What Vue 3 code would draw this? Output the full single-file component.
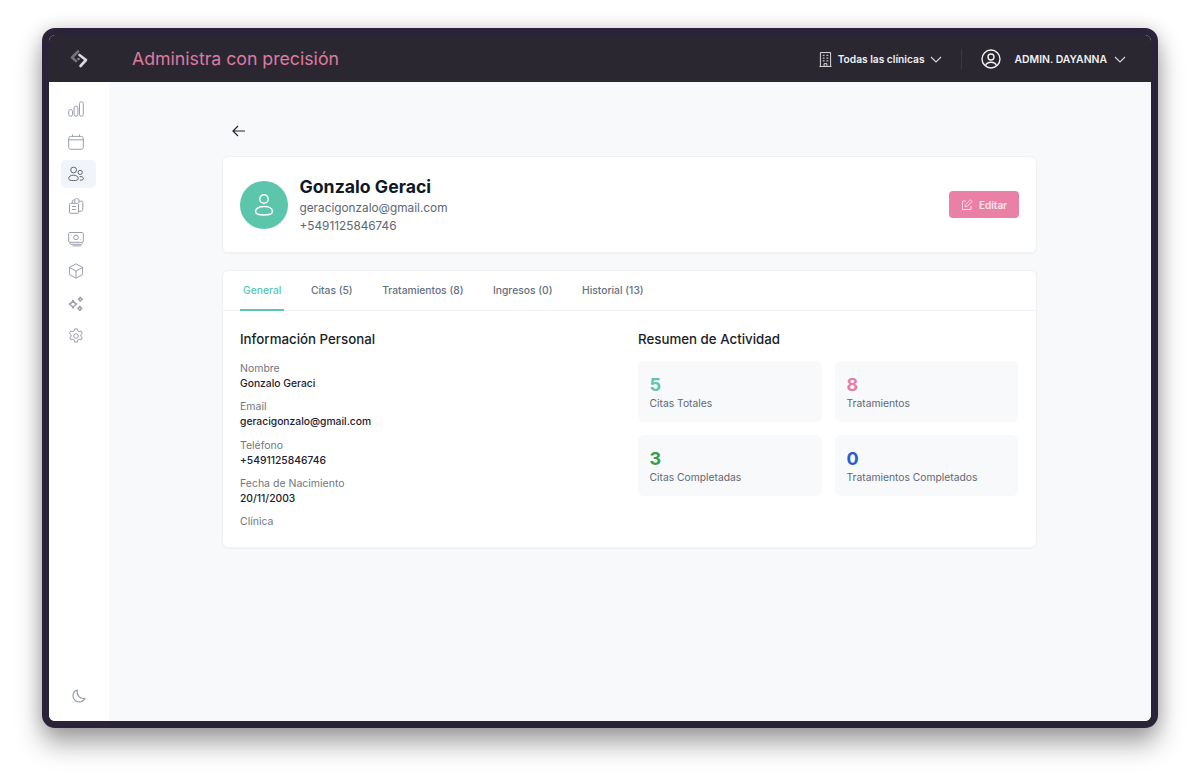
<template>
  <div class="page">
    <div class="frame">
      <header class="topbar">
        <div class="logo-cell">
          <svg width="20" height="20" viewBox="0 0 20 20" fill="none">
            <path d="M9 2.500 3 8.500 7 12" stroke="#77737c" stroke-width="2.600" stroke-linecap="round" stroke-linejoin="round"/>
            <path d="M10.500 6 17 11 11.500 17" stroke="#dcdbde" stroke-width="2.600" stroke-linecap="round" stroke-linejoin="round"/>
            <circle cx="9.500" cy="10" r="1.300" fill="#8b8890"/>
          </svg>
        </div>
        <h1 class="slogan">Administra con precisión</h1>
        <div class="top-actions">
          <div class="clinics">
            <svg width="13" height="17" viewBox="0 0 14 17" fill="none" stroke="#e6e6e8" stroke-width="1">
              <path d="M1.500 16V1h11v15M.5 16h13M5.500 16v-3h3v3"/>
              <path d="M4 4h2M8 4h2M4 7h2M8 7h2M4 10h2M8 10h2"/>
            </svg>
            <span>Todas las clínicas</span>
            <svg class="chev" width="12" height="7" viewBox="0 0 12 7" fill="none"><path d="m1 1 5 5 5-5" stroke="#d5d5d8" stroke-width="1.100"/></svg>
          </div>
          <div class="divider"></div>
          <div class="user">
            <svg width="20" height="20" viewBox="0 0 20 20" fill="none" stroke="#f1f1f2" stroke-width="1.400">
              <circle cx="10" cy="10" r="9"/>
              <circle cx="10" cy="8" r="3"/>
              <path d="M4.600 16.400c.8-2.300 2.600-3.200 5.400-3.200s4.600.9 5.400 3.200"/>
            </svg>
            <span>ADMIN. DAYANNA</span>
            <svg class="chev" width="12" height="7" viewBox="0 0 12 7" fill="none"><path d="m1 1 5 5 5-5" stroke="#d5d5d8" stroke-width="1.100"/></svg>
          </div>
        </div>
      </header>

      <div class="body">
        <aside class="sidebar">
          <nav class="nav">
            <a class="nav-item">
              <svg width="16" height="16" viewBox="0 0 16 16" fill="none" class="ico">
                <rect x=".7" y="8.500" width="3.800" height="6.800" rx="1.900"/>
                <rect x="6.100" y="5" width="3.800" height="10.300" rx="1.900"/>
                <rect x="11.500" y=".7" width="3.800" height="14.600" rx="1.900"/>
              </svg>
            </a>
            <a class="nav-item">
              <svg width="16" height="16" viewBox="0 0 16 16" fill="none" class="ico">
                <rect x=".7" y="2.400" width="14.600" height="12.900" rx="2"/>
                <path d="M.7 5.800h14.600M4.500.5v2.600M11.500.5v2.600"/>
              </svg>
            </a>
            <a class="nav-item active">
              <svg width="16" height="16" viewBox="0 0 16 16" fill="none" class="ico dark">
                <circle cx="5.600" cy="4" r="2.900"/>
                <circle cx="12.200" cy="6.400" r="2.100"/>
                <path d="M5.400 9.200C2.600 9.200.7 10.400.7 12.400c0 1.600 1.400 2.200 4.700 2.200s4.800-.6 4.800-2.200c0-2-2-3.200-4.800-3.200Z"/>
                <path d="M11.600 10.600c2.200-.3 3.800.5 3.800 2 0 1.100-1.200 1.600-3.600 1.600"/>
              </svg>
            </a>
            <a class="nav-item">
              <svg width="16" height="16" viewBox="0 0 16 16" fill="none" class="ico">
                <rect x="1.500" y="5.300" width="9" height="10" rx="1.200"/>
                <path d="M4.100 8.500h3.800M4.100 11.500h3.800"/>
                <path d="M4.300 5V3.200c0-.7.5-1.200 1.200-1.200h1.300M6.800 5V2.200C6.800 1.300 7.400.7 8.300.7h1.200c.8 0 1.400.6 1.400 1.400V5M10.900 3.200h2.800c.6 0 1.100.5 1.100 1.100v7.400c0 .8-.6 1.400-1.400 1.400h-2.800"/>
              </svg>
            </a>
            <a class="nav-item">
              <svg width="16" height="16" viewBox="0 0 16 16" fill="none" class="ico">
                <rect x=".7" y="1.500" width="14.600" height="9.800" rx="1"/>
                <circle cx="8" cy="6.400" r="2.300"/>
                <path d="M3 4.200h.6M12.400 8.600h.6M2 11.300v1c0 .6.4 1 1 1h10.500c.6 0 1-.4 1-1M4.600 14.900h8.800"/>
              </svg>
            </a>
            <a class="nav-item">
              <svg width="16" height="16" viewBox="0 0 16 16" fill="none" class="ico">
                <path d="M8 .8 14.600 4.400v7.200L8 15.200 1.400 11.600V4.400L8 .8Z"/>
                <path d="M1.400 4.400 8 8l6.600-3.600M8 8v7.200"/>
              </svg>
            </a>
            <a class="nav-item">
              <svg width="16" height="16" viewBox="0 0 16 16" fill="none" class="ico thick">
                <path d="M5 4c.5 2.400 1.600 3.600 4 4.200-2.400.6-3.500 1.800-4 4.200-.5-2.400-1.600-3.600-4-4.200C3.400 7.600 4.500 6.400 5 4Z"/>
                <path d="M12.300.8c.3 1.400 1 2.100 2.400 2.400-1.400.3-2.100 1-2.400 2.400-.3-1.400-1-2.100-2.400-2.400 1.400-.3 2.100-1 2.400-2.400Z"/>
                <path d="M11.800 10c.3 1.400 1 2.100 2.400 2.400-1.400.3-2.100 1-2.400 2.400-.3-1.400-1-2.100-2.400-2.400 1.400-.3 2.100-1 2.400-2.400Z"/>
              </svg>
            </a>
            <a class="nav-item">
              <svg width="16" height="16" viewBox="0 0 16 16" fill="none" class="ico">
                <path d="M6.700.9h2.600l.4 2 1.400.8 2-.6 1.300 2.200-1.500 1.400v1.600l1.500 1.400-1.300 2.200-2-.6-1.400.8-.4 2H6.700l-.4-2-1.400-.8-2 .6-1.300-2.200 1.500-1.400V6.700L1.400 5.300l1.300-2.200 2 .6 1.400-.8.6-2Z"/>
                <circle cx="8" cy="8" r="2.300"/>
              </svg>
            </a>
          </nav>
          <svg class="moon" width="14" height="14" viewBox="0 0 14 14" fill="none">
            <path d="M5.200 1C2.800 1.800 1 4 1 6.800 1 10.200 3.800 13 7.200 13c2.500 0 4.700-1.500 5.800-3.700-4.700 1-8.800-3-7.800-8.300Z" stroke="#8f97a3" stroke-width="1.100" stroke-linejoin="round"/>
          </svg>
        </aside>

        <main class="content">
          <div class="container">
            <button class="back">
              <svg width="14" height="12" viewBox="0 0 14 12" fill="none"><path d="M13 6H1.500M6 1 1 6l5 5" stroke="#1f2430" stroke-width="1.200"/></svg>
            </button>

            <section class="card profile">
              <div class="avatar">
                <svg width="20" height="24" viewBox="0 0 20 24" fill="none" stroke="#fff" stroke-width="1.400">
                  <circle cx="10" cy="6" r="4.200"/>
                  <path d="M10 13.500c-5 0-8.500 2-8.500 5 0 2.300 2.500 3.500 8.500 3.500s8.500-1.200 8.500-3.500c0-3-3.500-5-8.500-5Z"/>
                </svg>
              </div>
              <div class="who">
                <h2>{{ patient.name }}</h2>
                <p>{{ patient.email }}</p>
                <p>{{ patient.phone }}</p>
              </div>
              <button class="edit">
                <svg width="12" height="12" viewBox="0 0 12 12" fill="none" stroke="#fbdce7" stroke-width="1">
                  <path d="M10 7v3.500H1.500V2H5"/>
                  <path d="M4.500 5.500 9.500.8l1.700 1.700-5 4.800-2 .4.300-2.200Z"/>
                </svg>
                Editar
              </button>
            </section>

            <section class="card details">
              <div class="tabs">
                <a v-for="(t, i) in tabs" :key="t" class="tab" :class="{ on: i === 0 }">{{ t }}</a>
              </div>
              <div class="columns">
                <div>
                  <h3>Información Personal</h3>
                  <dl class="fields">
                    <div v-for="f in fields" :key="f.label" class="field">
                      <dt>{{ f.label }}</dt>
                      <dd v-if="f.value">{{ f.value }}</dd>
                    </div>
                  </dl>
                </div>
                <div>
                  <h3>Resumen de Actividad</h3>
                  <div class="stats">
                    <div v-for="s in stats" :key="s.label" class="stat">
                      <strong :class="s.tone">{{ s.value }}</strong>
                      <span>{{ s.label }}</span>
                    </div>
                  </div>
                </div>
              </div>
            </section>
          </div>
        </main>
      </div>
    </div>
  </div>
</template>

<script setup>
const patient = {
  name: 'Gonzalo Geraci',
  email: 'geracigonzalo@gmail.com',
  phone: '+5491125846746'
}

const tabs = ['General', 'Citas (5)', 'Tratamientos (8)', 'Ingresos (0)', 'Historial (13)']

const fields = [
  { label: 'Nombre', value: patient.name },
  { label: 'Email', value: patient.email },
  { label: 'Teléfono', value: patient.phone },
  { label: 'Fecha de Nacimiento', value: '20/11/2003' },
  { label: 'Clínica', value: '' }
]

const stats = [
  { value: 5, label: 'Citas Totales', tone: 'teal' },
  { value: 8, label: 'Tratamientos', tone: 'pink' },
  { value: 3, label: 'Citas Completadas', tone: 'green' },
  { value: 0, label: 'Tratamientos Completados', tone: 'blue' }
]
</script>

<style>
html,
body {
  margin: 0;
  background: #fff;
}
</style>

<style scoped>
.page {
  width: 1200px;
  height: 783px;
  padding: 28px 42px 55px;
  box-sizing: border-box;
  overflow: hidden;
  font-family: Inter, "Liberation Sans", sans-serif;
  background: #fff;
}
.frame {
  height: 100%;
  box-sizing: border-box;
  display: flex;
  flex-direction: column;
  border: 7px solid #2b2438;
  border-radius: 13px;
  overflow: hidden;
  background: #fff;
  box-shadow: 0 16px 26px rgba(0, 0, 0, 0.34), 0 0 18px rgba(0, 0, 0, 0.16);
}
.topbar {
  height: 47px;
  flex: none;
  display: flex;
  align-items: center;
  background: #2a2731;
}
.logo-cell {
  width: 60px;
  display: flex;
  justify-content: center;
}
.slogan {
  margin: 0 0 0 23px;
  font-size: 17.700px;
  font-weight: 400;
  color: #df7aa0;
}
.top-actions {
  margin-left: auto;
  display: flex;
  align-items: center;
  margin-top: 1px;
  padding-right: 25px;
  font-size: 10.400px;
  font-weight: 600;
  color: #f1f1f2;
}
.clinics,
.user {
  display: flex;
  align-items: center;
}
.clinics span {
  margin: 0 5px 0 6px;
  font-size: 10.200px;
}
.divider {
  width: 1px;
  height: 20px;
  margin: 0 19px;
  background: #3c3944;
}
.user span {
  margin: 0 7px 0 14px;
}
.body {
  flex: 1;
  min-height: 0;
  display: flex;
}
.sidebar {
  width: 60px;
  flex: none;
  display: flex;
  flex-direction: column;
  align-items: flex-start;
  padding: 13px 0 18px 12px;
  box-sizing: border-box;
  background: #fff;
}
.nav {
  display: flex;
  flex-direction: column;
  gap: 4px;
}
.nav-item {
  width: 35px;
  height: 28.400px;
  display: flex;
  align-items: center;
  padding-left: 7px;
  box-sizing: border-box;
  border-radius: 5px;
}
.nav-item.active {
  background: #f1f4f9;
}
.ico {
  stroke: #98a0ac;
  stroke-width: 1;
}
.ico.dark {
  stroke: #5e6775;
}
.ico.thick {
  stroke-width: 1.300;
}
.moon {
  margin-top: auto;
  margin-left: 11px;
}
.content {
  flex: 1;
  min-width: 0;
  background: #f8f9fb;
}
.container {
  width: 815px;
  margin-left: 113px;
  padding-top: 38px;
}
.back {
  display: block;
  height: 22px;
  padding: 2px 0 0 10px;
  margin-bottom: 14px;
  border: 0;
  background: none;
}
.card {
  background: #fff;
  border: 1px solid #eff1f4;
  border-radius: 6px;
  box-shadow: 0 1px 2px rgba(30, 40, 60, 0.04);
  box-sizing: border-box;
}
.profile {
  height: 97px;
  display: flex;
  align-items: center;
  padding: 0 17px;
  margin-bottom: 17px;
}
.avatar {
  width: 48px;
  height: 48px;
  flex: none;
  display: flex;
  align-items: center;
  justify-content: center;
  border-radius: 50%;
  background: #5cc6ac;
}
.who {
  margin-left: 11.500px;
}
.who h2 {
  margin: 0;
  font-size: 17.700px;
  line-height: 24px;
  font-weight: 700;
  color: #101828;
}
.who p {
  margin: 0;
  font-size: 11.800px;
  line-height: 18px;
  color: #5d6675;
}
.edit {
  margin-left: auto;
  width: 70px;
  height: 27px;
  display: flex;
  align-items: center;
  justify-content: center;
  gap: 6px;
  padding: 0;
  border: 0;
  border-radius: 4px;
  background: #ea80a6;
  color: #fde6ee;
  font: 600 10px Inter, "Liberation Sans", sans-serif;
}
.details {
  height: 278px;
}
.tabs {
  height: 40px;
  box-sizing: border-box;
  display: flex;
  gap: 23.500px;
  padding-left: 17px;
  border-bottom: 1px solid #f0f1f4;
}
.tab {
  height: 40px;
  box-sizing: border-box;
  padding: 13px 3px 0;
  font-size: 10.300px;
  font-weight: 500;
  color: #667080;
}
.tab.on {
  color: #5cc6ac;
  border-bottom: 2px solid #5cc6ac;
}
.columns {
  display: grid;
  grid-template-columns: 381px 380px;
  column-gap: 17px;
  padding: 20px 17px 0;
}
h3 {
  margin: 0;
  font-size: 13.300px;
  line-height: 17px;
  font-weight: 500;
  color: #181d27;
}
.fields {
  margin: 13px 0 0;
}
.field {
  height: 38.300px;
}
dt {
  font-size: 10.500px;
  line-height: 15px;
  color: #6f7785;
}
dd {
  margin: 0;
  font-size: 10.300px;
  line-height: 15px;
  font-weight: 500;
  color: #1b2130;
}
.stats {
  margin-top: 13px;
  display: grid;
  grid-template-columns: 184px 183px;
  gap: 13px;
}
.stat {
  height: 61px;
  display: flex;
  flex-direction: column;
  padding: 13.500px 11.500px 0;
  box-sizing: border-box;
  background: #f8f9fb;
  border-radius: 6px;
}
.stat strong {
  font-size: 18px;
  line-height: 20px;
  font-weight: 700;
}
.stat span {
  margin-top: 1px;
  font-size: 10.300px;
  line-height: 15px;
  color: #5f6877;
}
.teal { color: #5cc6ac; }
.pink { color: #e77da3; }
.green { color: #2f9e4f; }
.blue { color: #2c5bd0; }
</style>
